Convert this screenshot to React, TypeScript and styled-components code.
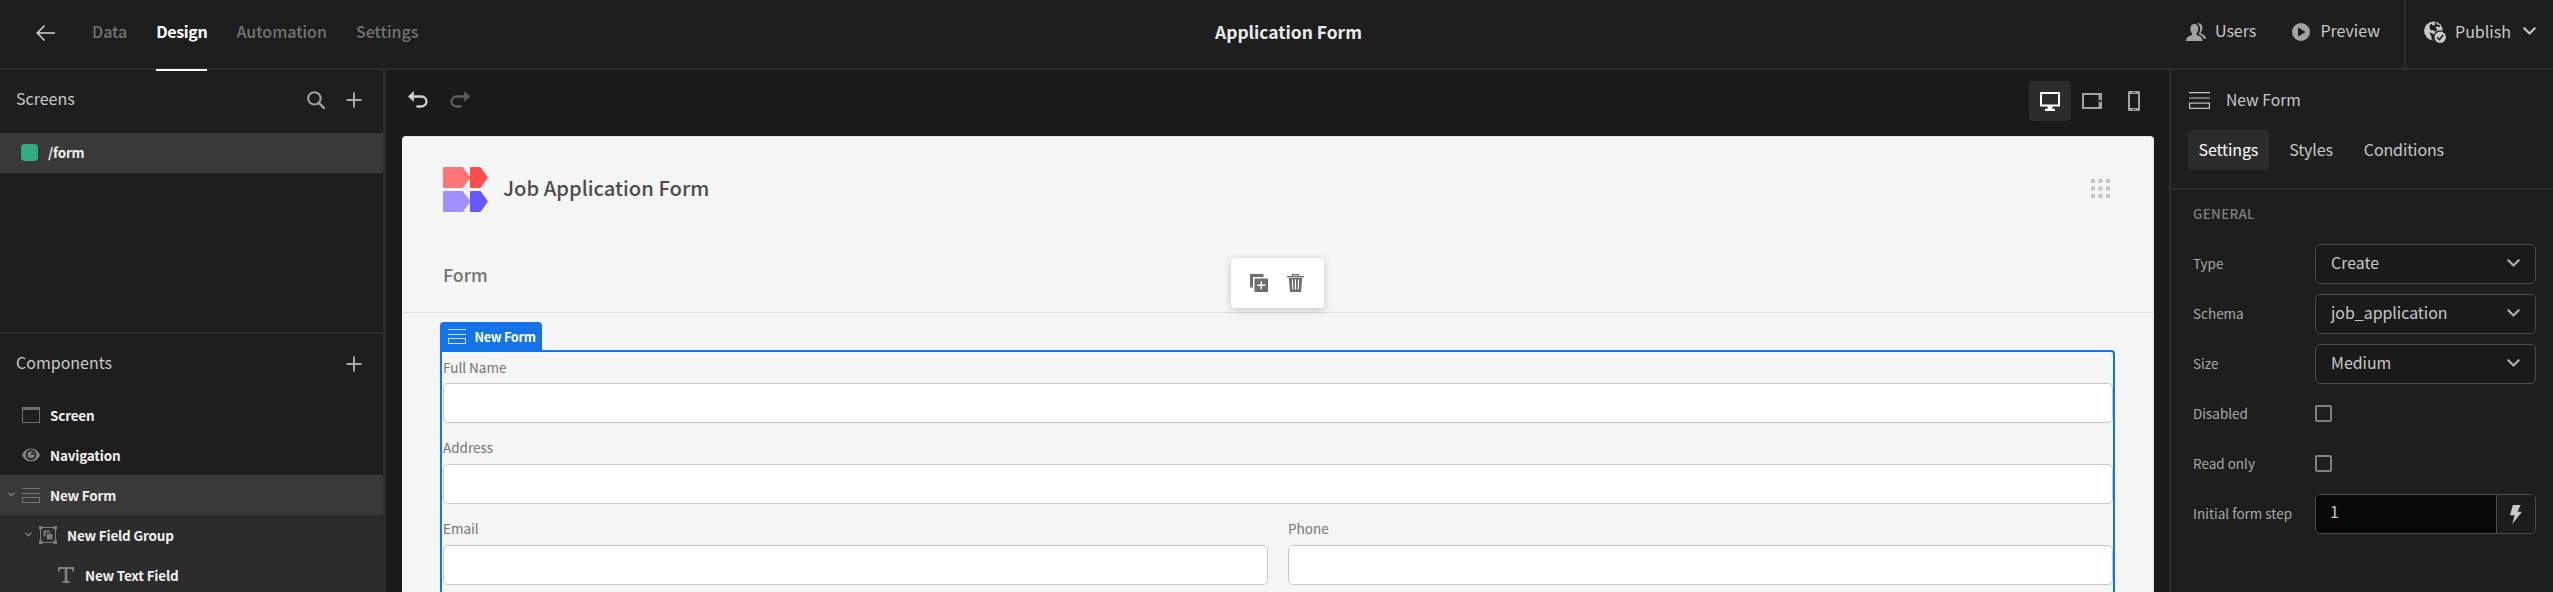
import React from "react";
import styled, { createGlobalStyle, css } from "styled-components";

const Global = createGlobalStyle`
  * { box-sizing: border-box; }
  body {
    margin: 0;
    background: #1a1a1a;
    color: #c8c8c8;
    font-family: "Noto Sans CJK SC", "Noto Sans", sans-serif;
    overflow: hidden;
  }
  svg { display: block; flex: none; }
`;

/* ---------- text ---------- */

const Text = styled.span<{
  $size?: number;
  $weight?: number;
  $color?: string;
  $lift?: number;
  $spacing?: number;
}>`
  display: block;
  white-space: nowrap;
  line-height: 20px;
  font-size: ${(p) => p.$size ?? 16}px;
  font-weight: ${(p) => p.$weight ?? 400};
  color: ${(p) => p.$color ?? "#c8c8c8"};
  letter-spacing: ${(p) => p.$spacing ?? 0}px;
  margin-bottom: ${(p) => (p.$lift ?? 0) * 2}px;
`;

/* ---------- shell ---------- */

const Shell = styled.div`
  display: flex;
  flex-direction: column;
  height: 100vh;
  width: 100%;
  overflow: hidden;
`;

const TopBar = styled.header`
  display: grid;
  grid-template-columns: 1fr auto 1fr;
  grid-template-rows: 68px;
  height: 70px;
  flex: none;
  background: #1e1e1e;
  border-bottom: 2px solid #2c2c2c;
`;

const TopLeft = styled.div`
  display: flex;
  align-items: center;
  padding-left: 36px;
`;

const BackSlot = styled.div`
  width: 34px;
  margin-bottom: 2px;
`;

const TopTabs = styled.nav`
  display: flex;
  gap: 29px;
  align-self: flex-start;
  width: 370px;
  height: 71px;
  padding-left: 22px;
  border-bottom: 1px solid #2c2c2c;
`;

const TopTab = styled.div<{ $active?: boolean }>`
  position: relative;
  display: flex;
  align-items: center;
  height: 68px;
  ${(p) =>
    p.$active &&
    css`
      &::after {
        content: "";
        position: absolute;
        left: 0;
        right: 0;
        bottom: -3px;
        height: 2px;
        background: #fff;
      }
    `}
`;

const TopCenter = styled.div`
  display: flex;
  align-items: center;
  padding-left: 24px;
`;

const TopRight = styled.div`
  display: flex;
  justify-content: flex-end;
`;

const TopAction = styled.div<{ $gap: number; $right: number }>`
  display: flex;
  align-items: center;
  gap: ${(p) => p.$gap}px;
  padding-right: ${(p) => p.$right}px;
`;

const PublishArea = styled.div`
  display: flex;
  align-items: center;
  width: 149px;
  border-left: 2px solid #2c2c2c;
  padding-left: 18px;
  gap: 9px;
`;

const PublishChevron = styled.div`
  margin: 0 0 6px 3px;
`;

const Raised = styled.div<{ $by: number }>`
  margin-bottom: ${(p) => p.$by}px;
`;

const Main = styled.div`
  display: flex;
  flex: 1;
  min-height: 0;
`;

/* ---------- left panel ---------- */

const LeftPanel = styled.aside`
  display: flex;
  flex-direction: column;
  width: 386px;
  flex: none;
  overflow: hidden;
  background: #1e1e1e;
  border-right: 3px solid #2c2c2c;
`;

const ScreensSection = styled.section`
  height: 264px;
  flex: none;
  border-bottom: 2px solid #2c2c2c;
`;

const SectionHeader = styled.div<{ $after: number }>`
  display: flex;
  flex: none;
  align-items: center;
  height: 59px;
  margin-bottom: ${(p) => p.$after}px;
  padding: 0 21px 0 16px;
`;

const Spacer = styled.div`
  flex: 1;
`;

const HeaderIcons = styled.div`
  display: flex;
  align-items: center;
  gap: 21px;
`;

const TreeRow = styled.div<{ $indent: number; $selected?: boolean; $child?: boolean }>`
  display: flex;
  flex: none;
  align-items: center;
  height: 40px;
  padding-left: ${(p) => p.$indent}px;
  background: ${(p) => (p.$selected ? "#393939" : p.$child ? "#2c2c2c" : "transparent")};
`;

const ArrowSlot = styled.div`
  display: flex;
  width: 14px;
  height: 6px;
`;

const IconSlot = styled.div`
  display: flex;
  justify-content: center;
  width: 18px;
  margin-right: 10px;
`;

const RouteDot = styled.div`
  width: 17px;
  height: 17px;
  margin: 0 10px 1px 0;
  border-radius: 4px;
  background: #33ab84;
`;

/* ---------- preview ---------- */

const Center = styled.main`
  display: flex;
  flex-direction: column;
  flex: 1;
  min-width: 0;
  padding: 0 15px 0 16px;
  background: #1a1a1a;
`;

const Toolbar = styled.div`
  display: flex;
  align-items: center;
  justify-content: space-between;
  height: 66px;
  flex: none;
  padding: 0 0 4px 6px;
`;

const History = styled.div`
  display: flex;
  gap: 22px;
  margin-bottom: 3px;
`;

const Devices = styled.div`
  display: flex;
  align-items: center;
  margin-right: -1px;
`;

const DeviceButton = styled.div<{ $active?: boolean; $width: number }>`
  display: flex;
  align-items: center;
  justify-content: center;
  width: ${(p) => p.$width}px;
  height: 40px;
  border-radius: 4px;
  background: ${(p) => (p.$active ? "#2c2c2c" : "transparent")};
`;

const Canvas = styled.div`
  flex: 1;
  min-height: 0;
  overflow: hidden;
  border-radius: 4px 4px 0 0;
  background: #f5f5f5;
  border: 1px solid #e4e4e4;
  border-width: 1px 1px 0 0;
`;

const AppHeader = styled.div`
  position: relative;
  display: flex;
  flex-direction: column;
  height: 176px;
  padding: 30px 43px 0 41px;
  border-bottom: 1px solid #dedede;
`;

const Brand = styled.div`
  display: flex;
  align-items: center;
  gap: 15px;
  height: 45px;
  margin-bottom: 52px;
`;

const ActionPopup = styled.div`
  position: absolute;
  left: 829px;
  top: 121px;
  display: flex;
  align-items: center;
  gap: 19px;
  width: 93px;
  height: 50px;
  padding-left: 19px;
  border-radius: 4px;
  background: #fff;
  box-shadow: 0 2px 8px rgba(0, 0, 0, 0.2);
`;

const FormArea = styled.div`
  padding: 9px 38px 0 38px;
`;

const SelectionTag = styled.div`
  display: flex;
  align-items: center;
  gap: 8.5px;
  width: 102px;
  height: 28px;
  padding-left: 8px;
  border-radius: 4px 4px 0 0;
  background: #1473e6;
`;

const Selection = styled.div`
  height: 300px;
  border: 2px solid #1473e6;
  border-radius: 0 4px 4px 4px;
  padding-left: 1px;
`;

const FieldRow = styled.div`
  display: flex;
  gap: 20px;
`;

const Field = styled.div`
  flex: 1;
  height: 81px;
`;

const FieldLabel = styled.div<{ $top: number }>`
  height: 31px;
  padding-top: ${(p) => p.$top}px;
`;

const FieldInput = styled.div`
  height: 40px;
  border: 1px solid #c8c8c8;
  border-radius: 5px;
  background: #fff;
`;

/* ---------- right panel ---------- */

const RightPanel = styled.aside`
  width: 384px;
  flex: none;
  background: #1e1e1e;
  border-left: 2px solid #2c2c2c;
`;

const PanelHead = styled.div`
  height: 120px;
  border-bottom: 2px solid #2c2c2c;
  padding: 10px 17px 0;
`;

const PanelTitle = styled.div`
  display: flex;
  align-items: center;
  gap: 16px;
  height: 41px;
  padding-left: 1px;
`;

const PanelTabs = styled.div`
  display: flex;
  gap: 10px;
  margin-top: 9px;
`;

const PanelTab = styled.div<{ $active?: boolean }>`
  display: flex;
  align-items: center;
  height: 40px;
  padding: 0 10.5px;
  border-radius: 4px;
  background: ${(p) => (p.$active ? "#2c2c2c" : "transparent")};
`;

const SettingsBody = styled.div`
  padding: 13px 17px 0 22px;
`;

const GroupTitle = styled.div`
  height: 36px;
`;

const Setting = styled.div`
  display: grid;
  grid-template-columns: 122px 1fr;
  align-items: center;
  height: 50px;
`;

const Select = styled.div`
  display: flex;
  align-items: center;
  justify-content: space-between;
  height: 40px;
  padding: 0 15px;
  border: 1px solid #4b4b4b;
  border-radius: 5px;
  background: #1a1a1a;
`;

const Checkbox = styled.div`
  width: 17px;
  height: 17px;
  margin-bottom: 1px;
  border: 2px solid #808080;
  border-radius: 2px;
`;

const BindingInput = styled.div`
  display: flex;
  height: 40px;
  border: 1px solid #4b4b4b;
  border-radius: 5px;
  overflow: hidden;
`;

const BindingValue = styled.div`
  display: flex;
  align-items: center;
  flex: 1;
  padding-left: 14px;
  background: #080808;
`;

const BindingButton = styled.div`
  display: flex;
  align-items: center;
  justify-content: center;
  width: 39px;
  border-left: 1px solid #4b4b4b;
  background: #1c1c1c;
`;

/* ---------- icons ---------- */

const BackIcon = () => (
  <svg width="20" height="18" viewBox="0 0 20 18" fill="none" stroke="#d5d5d5" strokeWidth="1.5">
    <path d="M19 9H1.5M8.6 1.4 1.2 9l7.4 7.6" />
  </svg>
);

const SearchIcon = () => (
  <svg width="18" height="18" viewBox="0 0 18 18" fill="none" stroke="#a2a2a2" strokeWidth="2">
    <circle cx="7.4" cy="7.4" r="6.2" />
    <path d="m11.8 11.8 5.3 5.3" strokeWidth="2.4" strokeLinecap="round" />
  </svg>
);

const PlusIcon = () => (
  <svg width="16" height="16" viewBox="0 0 16 16" stroke="#a8a8a8" strokeWidth="2">
    <path d="M8 .5v15M.5 8h15" />
  </svg>
);

const ArrowDown = () => (
  <svg width="7" height="5" viewBox="0 0 7 5" fill="none" stroke="#808080" strokeWidth="1.3">
    <path d="m.5.8 3 3 3-3" />
  </svg>
);

const Chevron = ({ color = "#b0b0b0" }: { color?: string }) => (
  <svg
    width="13"
    height="8"
    viewBox="0 0 13 8"
    fill="none"
    stroke={color}
    strokeWidth="2.2"
    strokeLinecap="round"
    strokeLinejoin="round"
  >
    <path d="m1.3 1.3 5.2 5.2 5.2-5.2" />
  </svg>
);

const ScreenIcon = () => (
  <svg width="18" height="16" viewBox="0 0 18 16">
    <rect x=".5" y=".5" width="17" height="15" fill="none" stroke="#6e6e6e" />
    <path d="M0 0h18v3H0z" fill="#6e6e6e" />
  </svg>
);

const EyeIcon = () => (
  <svg width="18" height="14" viewBox="0 0 18 14">
    <path
      d="M9 .5C4.700.5 1.300 3.400 0 7c1.300 3.600 4.700 6.500 9 6.500s7.700-2.900 9-6.500C16.700 3.400 13.300.5 9 .5Z"
      fill="#808080"
    />
    <circle cx="9" cy="6.800" r="5.200" fill="#1e1e1e" />
    <circle cx="9" cy="6.800" r="3.500" fill="#808080" />
    <circle cx="10.300" cy="5.700" r="1.300" fill="#1e1e1e" />
  </svg>
);

const FormIcon = ({ color = "#747474" }: { color?: string }) => (
  <svg width="18" height="15" viewBox="0 0 18 15">
    <path d="M0 0h18v1H0zM0 5h18v1H0z" fill={color} />
    <rect x=".5" y="9.500" width="17" height="5" fill="none" stroke={color} />
  </svg>
);

const FormIconLarge = () => (
  <svg width="21" height="17" viewBox="0 0 21 17">
    <path d="M0 0h21v1.200H0zM0 5.400h21v1.200H0z" fill="#c8c8c8" />
    <rect x=".6" y="11.100" width="19.800" height="5.200" fill="none" stroke="#c8c8c8" strokeWidth="1.200" />
  </svg>
);

const GroupIcon = () => (
  <svg width="18" height="18" viewBox="0 0 18 18" fill="#7c7c7c">
    <path d="M0 0h3.500v3.500H0zM14.500 0H18v3.500h-3.500zM0 14.500h3.500V18H0zM14.500 14.500H18V18h-3.500z" />
    <rect x="1.500" y="1.500" width="15" height="15" fill="none" stroke="#7c7c7c" />
    <path d="M4.500 4.500h6.500v2H6.500V10.500H4.500z" />
    <path d="M7.800 7.800h5.700v5.700H7.800z" />
  </svg>
);

const TextIcon = () => (
  <svg width="16" height="16" viewBox="0 0 16 16" fill="#808080">
    <path d="M0 0h16v4.500h-1.600L14 2H9.300v12H11.500v2h-7v-2h2.200V2H2l-.4 2.500H0z" />
  </svg>
);

const UndoIcon = ({ color, flip }: { color: string; flip?: boolean }) => (
  <svg width="20" height="17" viewBox="0 0 20 17">
    <g transform={flip ? "translate(20 0) scale(-1 1)" : undefined}>
      <path d="M0 5.500 5.800 0v11z" fill={color} />
      <path
        d="M4 5.500h9.500a5 5 0 0 1 0 10H9.300"
        fill="none"
        stroke={color}
        strokeWidth="2.300"
        strokeLinecap="round"
      />
    </g>
  </svg>
);

const DesktopIcon = () => (
  <svg width="20" height="19" viewBox="0 0 20 19">
    <rect x="1" y="1" width="18" height="12.500" fill="none" stroke="#fff" strokeWidth="2" />
    <path d="M7.600 14h4.800v2.800H15V19H5v-2.200h2.600z" fill="#fff" />
  </svg>
);

const TabletIcon = () => (
  <svg width="20" height="16" viewBox="0 0 20 16">
    <path d="M0 0h20v16H0zM2 2v12h14.600V2z" fill="#a2a2a2" fillRule="evenodd" />
    <circle cx="18.300" cy="8" r="1.300" fill="#1a1a1a" />
  </svg>
);

const PhoneIcon = () => (
  <svg width="12" height="20" viewBox="0 0 12 20">
    <rect width="12" height="20" rx="1" fill="#a2a2a2" />
    <path d="M2 3h8v14H2zM4.500 1.200h3v.9h-3zM4.800 18h2.400v1H4.800z" fill="#1a1a1a" />
  </svg>
);

const Logo = () => (
  <svg width="45" height="45" viewBox="0 0 45 45">
    <path d="M1 0h18.600L27 9.500v2L19.600 21H1a1 1 0 0 1-1-1V1a1 1 0 0 1 1-1Z" fill="#fb7575" />
    <path d="M28 0h9.500L45 10.500 37.500 21H28a1 1 0 0 1-1-1V1a1 1 0 0 1 1-1Z" fill="#ff4e4e" />
    <path d="M1 24h18.600L27 33.500v2L19.600 45H1a1 1 0 0 1-1-1V25a1 1 0 0 1 1-1Z" fill="#9f8fff" />
    <path d="M28 24h9.500L45 34.500 37.500 45H28a1 1 0 0 1-1-1V25a1 1 0 0 1 1-1Z" fill="#6a56ff" />
  </svg>
);

const GridIcon = () => (
  <svg width="19" height="19" viewBox="0 0 19 19" fill="#c6c6c6">
    {[0, 7.5, 15].map((y) => [0, 7.5, 15].map((x) => <rect key={`${x}-${y}`} x={x} y={y} width="4" height="4" />))}
  </svg>
);

const DuplicateIcon = () => (
  <svg width="18" height="18" viewBox="0 0 18 18">
    <path d="M0 0h13.500v3H3v10.500H0z" fill="#6e6e6e" />
    <path d="M4.500 4.500H18V18H4.500z" fill="#6e6e6e" />
    <path d="M11.200 7.200v8M7.200 11.200h8" stroke="#fff" strokeWidth="1.400" />
  </svg>
);

const TrashIcon = () => (
  <svg width="17" height="18" viewBox="0 0 17 18">
    <path d="M5.500 2V.6h6V2" fill="none" stroke="#6e6e6e" strokeWidth="1.200" />
    <path d="M0 2h17v1.400H0z" fill="#6e6e6e" />
    <path d="M1.800 4h13.400L14 18H3z" fill="#6e6e6e" />
    <path d="m5.300 5.500.6 10M8.500 5.500v10M11.700 5.500l-.6 10" stroke="#fff" strokeWidth="1.100" />
  </svg>
);

const UsersIcon = () => (
  <svg width="20" height="18" viewBox="0 0 20 18" fill="#a2a2a2">
    <path d="M11.200.4c2.900-1 5.200 1 5.200 4.300 0 2-.8 3.700-1.500 4.500-.5.600-.3 1.300.4 1.600 2.400.9 4.500 2 4.700 4.900h-2.300c-.5-2-2-3.200-4.400-4.200-.5-.2-.6-.8-.3-1.200.700-1.100 1.100-2.600 1.100-4.300 0-2.500-1-4.600-2.900-5.600Z" />
    <path
      d="M8.400 1c2.500 0 3.900 1.900 3.900 4.700 0 2-.7 3.500-1.600 4.500-.5.600-.4 1.700.5 2 2.700.8 5.100 1.900 5.300 5.800H0c.2-3.900 2.700-5 5.400-5.800.9-.3 1-1.400.5-2-.9-1-1.500-2.500-1.500-4.500C4.400 2.900 5.900 1 8.400 1Z"
      stroke="#1e1e1e"
      strokeWidth=".8"
      paintOrder="stroke"
    />
  </svg>
);

const PlayIcon = () => (
  <svg width="18" height="18" viewBox="0 0 18 18">
    <circle cx="9" cy="9" r="9" fill="#a2a2a2" />
    <path d="M6 4.200v9.600L13.600 9z" fill="#1e1e1e" />
  </svg>
);

const PublishIcon = () => (
  <svg width="22" height="22" viewBox="0 0 22 22">
    <circle cx="9.500" cy="9.800" r="9.400" fill="#c8c8c8" />
    <path
      d="M7.300 2.500 8.700 4.600 11 3.900l-.4-2 1.700-.4 1 2.200 2.800.2-.7 2.300-2.500-1-1.400 1.900 1.700 1.500-1.500 2.200-2.800-1.900-1.800.6L5.700 7.600l-.2-3.200ZM5.300 11.300l3.800 1.500 1.100 1.900-1 4.500-1.500-.4-.4-3.600Z"
      fill="#1e1e1e"
    />
    <circle cx="16.200" cy="16.200" r="7" fill="#1e1e1e" />
    <circle cx="16.200" cy="16.200" r="5.700" fill="#c8c8c8" />
    <path d="m13.200 16.300 2.200 2.300 3.800-4.600" fill="none" stroke="#1e1e1e" strokeWidth="1.600" />
  </svg>
);

const BoltIcon = () => (
  <svg width="12" height="19" viewBox="0 0 12 19" fill="#c8c8c8">
    <path d="M2.800 0H10.500L7.500 6.800H12L2.300 19 4.600 10.200H0z" />
  </svg>
);

/* ---------- page ---------- */

const TreeLabel = ({ children, lift }: { children: React.ReactNode; lift?: number }) => (
  <Text $size={13.5} $weight={700} $color="#f0f0f0" $spacing={-0.2} $lift={lift}>
    {children}
  </Text>
);

const InputField = ({ label, top = 4 }: { label: string; top?: number }) => (
  <Field>
    <FieldLabel $top={top}>
      <Text $size={13.5} $color="#747474">
        {label}
      </Text>
    </FieldLabel>
    <FieldInput />
  </Field>
);

const SettingRow = ({ label, children }: { label: string; children: React.ReactNode }) => (
  <Setting>
    <Text $size={13.5} $color="#a8a8a8" $lift={1}>
      {label}
    </Text>
    {children}
  </Setting>
);

const SelectBox = ({ value }: { value: string }) => (
  <Select>
    <Text $size={15.9} $lift={1}>
      {value}
    </Text>
    <Raised $by={2}>
      <Chevron />
    </Raised>
  </Select>
);

export default function App() {
  return (
    <Shell>
      <Global />
      <TopBar>
        <TopLeft>
          <BackSlot>
            <BackIcon />
          </BackSlot>
          <TopTabs>
            {["Data", "Design", "Automation", "Settings"].map((name) => {
              const active = name === "Design";
              return (
                <TopTab key={name} $active={active}>
                  <Text
                    $weight={active ? 700 : 500}
                    $color={active ? "#fff" : "#747474"}
                    $spacing={active ? -0.35 : 0}
                    $lift={3}
                  >
                    {name}
                  </Text>
                </TopTab>
              );
            })}
          </TopTabs>
        </TopLeft>
        <TopCenter>
          <Text $size={17.4} $weight={700} $color="#ececec" $lift={2.5}>
            Application Form
          </Text>
        </TopCenter>
        <TopRight>
          <TopAction $gap={9} $right={36}>
            <Raised $by={4}>
              <UsersIcon />
            </Raised>
            <Text $lift={4}>Users</Text>
          </TopAction>
          <TopAction $gap={10} $right={24}>
            <Raised $by={4}>
              <PlayIcon />
            </Raised>
            <Text $lift={4}>Preview</Text>
          </TopAction>
          <PublishArea>
            <Raised $by={4}>
              <PublishIcon />
            </Raised>
            <Text $lift={3}>Publish</Text>
            <PublishChevron>
              <Chevron color="#c8c8c8" />
            </PublishChevron>
          </PublishArea>
        </TopRight>
      </TopBar>

      <Main>
        <LeftPanel>
          <ScreensSection>
            <SectionHeader $after={4}>
              <Text $lift={1.5}>Screens</Text>
              <Spacer />
              <HeaderIcons>
                <SearchIcon />
                <PlusIcon />
              </HeaderIcons>
            </SectionHeader>
            <TreeRow $indent={21} $selected>
              <RouteDot />
              <TreeLabel lift={1}>/form</TreeLabel>
            </TreeRow>
          </ScreensSection>
          <SectionHeader $after={2}>
            <Text $lift={1.5}>Components</Text>
            <Spacer />
            <HeaderIcons>
              <PlusIcon />
            </HeaderIcons>
          </SectionHeader>
          <TreeRow $indent={22}>
            <IconSlot>
              <ScreenIcon />
            </IconSlot>
            <TreeLabel>Screen</TreeLabel>
          </TreeRow>
          <TreeRow $indent={22}>
            <IconSlot>
              <EyeIcon />
            </IconSlot>
            <TreeLabel>Navigation</TreeLabel>
          </TreeRow>
          <TreeRow $indent={8} $selected>
            <ArrowSlot>
              <ArrowDown />
            </ArrowSlot>
            <IconSlot>
              <FormIcon />
            </IconSlot>
            <TreeLabel>New Form</TreeLabel>
          </TreeRow>
          <TreeRow $indent={25} $child>
            <ArrowSlot>
              <ArrowDown />
            </ArrowSlot>
            <IconSlot>
              <GroupIcon />
            </IconSlot>
            <TreeLabel>New Field Group</TreeLabel>
          </TreeRow>
          <TreeRow $indent={57} $child>
            <IconSlot>
              <TextIcon />
            </IconSlot>
            <TreeLabel>New Text Field</TreeLabel>
          </TreeRow>
        </LeftPanel>

        <Center>
          <Toolbar>
            <History>
              <UndoIcon color="#d0d0d0" />
              <UndoIcon color="#5c5c5c" flip />
            </History>
            <Devices>
              <DeviceButton $active $width={42}>
                <DesktopIcon />
              </DeviceButton>
              <DeviceButton $width={42}>
                <TabletIcon />
              </DeviceButton>
              <DeviceButton $width={42}>
                <PhoneIcon />
              </DeviceButton>
            </Devices>
          </Toolbar>
          <Canvas>
            <AppHeader>
              <Brand>
                <Logo />
                <Text $size={20.2} $weight={500} $color="#4b4b4b" $lift={2}>
                  Job Application Form
                </Text>
                <Spacer />
                <Raised $by={2}>
                  <GridIcon />
                </Raised>
              </Brand>
              <Text $size={17.8} $weight={500} $color="#747474">
                Form
              </Text>
              <ActionPopup>
                <DuplicateIcon />
                <TrashIcon />
              </ActionPopup>
            </AppHeader>
            <FormArea>
              <SelectionTag>
                <FormIcon color="#c8dffb" />
                <Text $size={12.7} $weight={700} $color="#fff" $spacing={-0.3} $lift={-1}>
                  New Form
                </Text>
              </SelectionTag>
              <Selection>
                <InputField label="Full Name" top={5} />
                <InputField label="Address" />
                <FieldRow>
                  <InputField label="Email" />
                  <InputField label="Phone" />
                </FieldRow>
              </Selection>
            </FormArea>
          </Canvas>
        </Center>

        <RightPanel>
          <PanelHead>
            <PanelTitle>
              <FormIconLarge />
              <Text $size={15.7} $lift={1}>
                New Form
              </Text>
            </PanelTitle>
            <PanelTabs>
              <PanelTab $active>
                <Text $color="#fff" $spacing={-0.12} $lift={1}>
                  Settings
                </Text>
              </PanelTab>
              <PanelTab>
                <Text $spacing={-0.12} $lift={1}>
                  Styles
                </Text>
              </PanelTab>
              <PanelTab>
                <Text $spacing={-0.12} $lift={1}>
                  Conditions
                </Text>
              </PanelTab>
            </PanelTabs>
          </PanelHead>
          <SettingsBody>
            <GroupTitle>
              <Text $size={13.4} $weight={500} $color="#808080" $spacing={0.3}>
                GENERAL
              </Text>
            </GroupTitle>
            <SettingRow label="Type">
              <SelectBox value="Create" />
            </SettingRow>
            <SettingRow label="Schema">
              <SelectBox value="job_application" />
            </SettingRow>
            <SettingRow label="Size">
              <SelectBox value="Medium" />
            </SettingRow>
            <SettingRow label="Disabled">
              <Checkbox />
            </SettingRow>
            <SettingRow label="Read only">
              <Checkbox />
            </SettingRow>
            <SettingRow label="Initial form step">
              <BindingInput>
                <BindingValue>
                  <Text $lift={3}>1</Text>
                </BindingValue>
                <BindingButton>
                  <BoltIcon />
                </BindingButton>
              </BindingInput>
            </SettingRow>
          </SettingsBody>
        </RightPanel>
      </Main>
    </Shell>
  );
}
